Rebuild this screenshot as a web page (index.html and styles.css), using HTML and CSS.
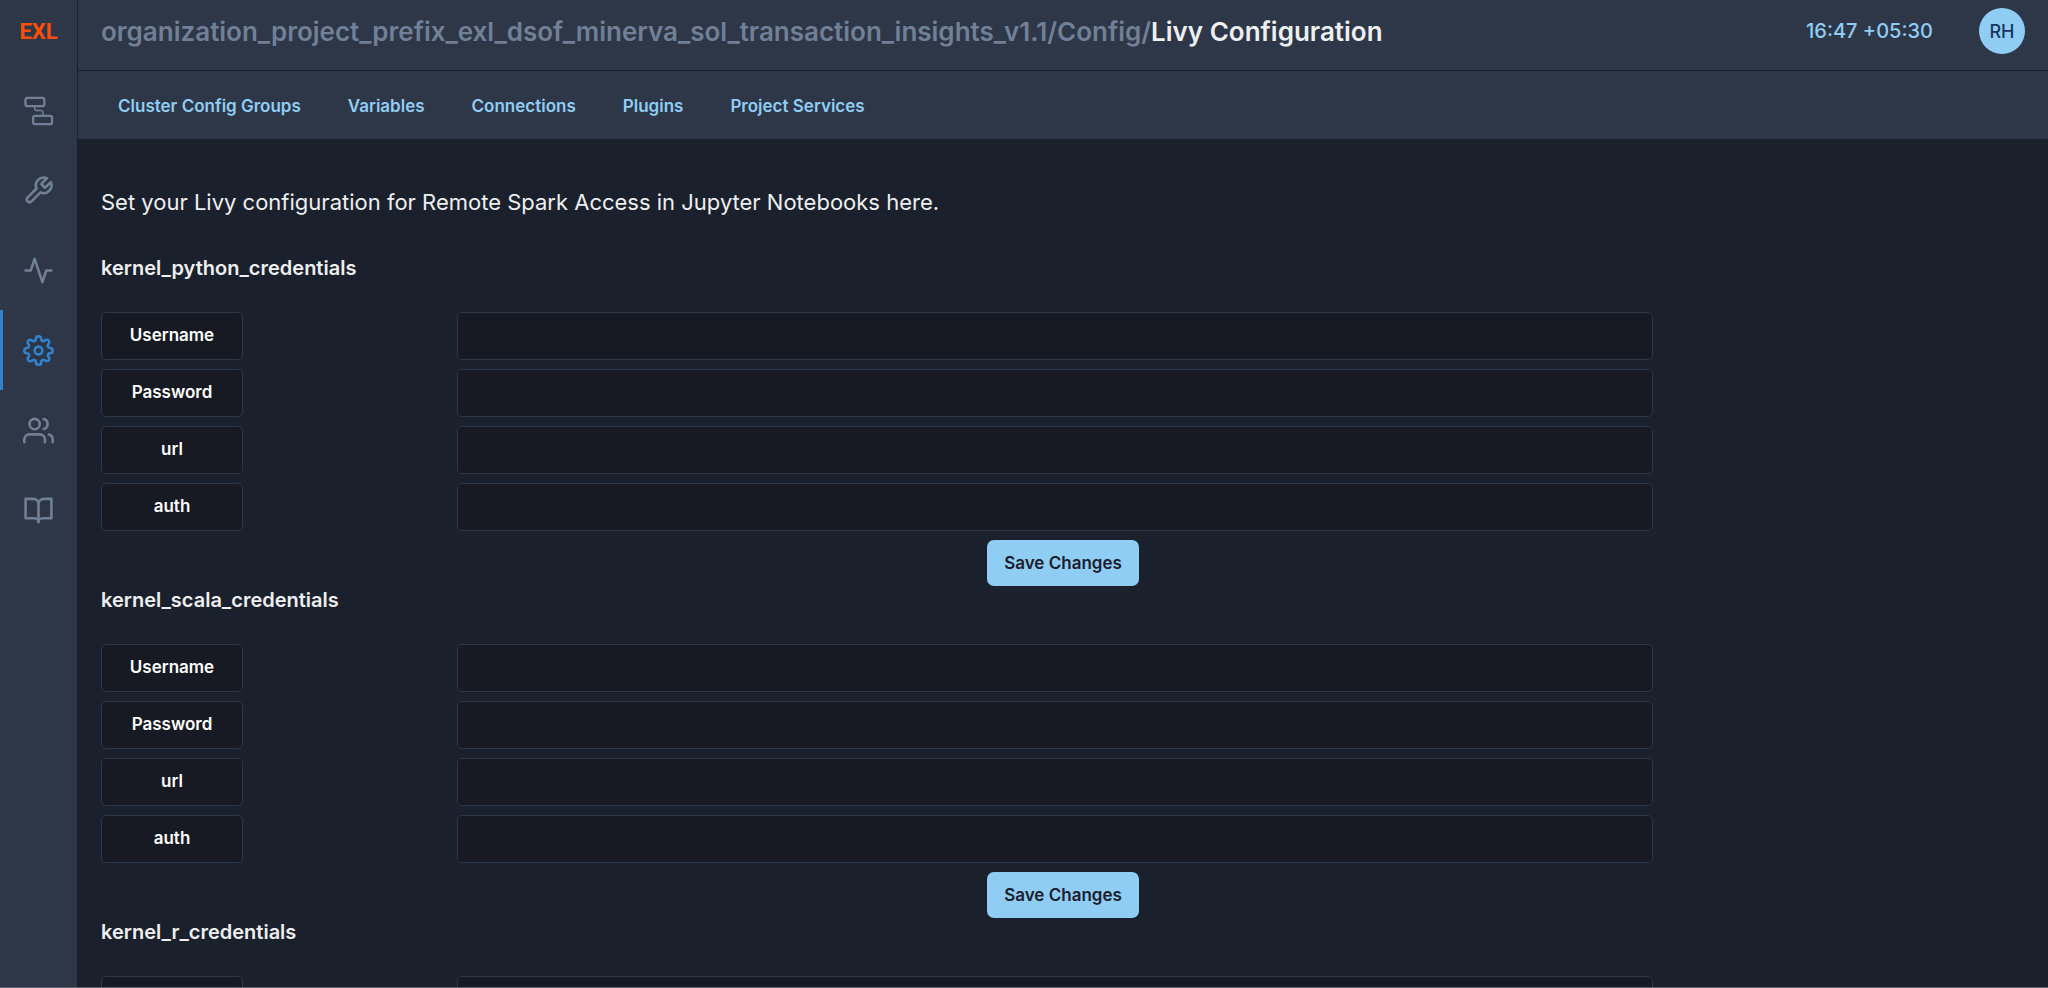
FILE: index.html
```html
<!DOCTYPE html>
<html lang="en">
<head>
<meta charset="utf-8">
<title>Livy Configuration</title>
<link rel="stylesheet" href="styles.css">
</head>
<body>
<div class="app">
  <aside class="sidebar">
    <a class="logo" href="#">EXL</a>
    <nav class="side-nav" aria-label="Main">
      <a class="side-link" href="#" aria-label="Pipelines"><svg class="icon" viewBox="0 0 32 32"><rect x="2.500" y="3" width="19.500" height="8.500" rx="2" stroke-width="2.400"/><rect x="10.500" y="21.500" width="19.500" height="8.500" rx="2" stroke-width="2.400"/><path stroke-width="1.500" d="M12 11.500v2.500a2 2 0 0 0 2 2h4.500a2 2 0 0 1 2 2v3.500"/></svg></a>
      <a class="side-link" href="#" aria-label="Tools"><svg class="icon" viewBox="0 0 24 24"><path d="M14.700 6.300a1 1 0 0 0 0 1.400l1.600 1.600a1 1 0 0 0 1.400 0l3.770-3.770a6 6 0 0 1-7.940 7.940l-6.910 6.910a2.120 2.120 0 0 1-3-3l6.910-6.910a6 6 0 0 1 7.940-7.940l-3.760 3.760z"/></svg></a>
      <a class="side-link" href="#" aria-label="Activity"><svg class="icon" viewBox="0 0 24 24"><path d="M22 12h-4l-3 9L9 3l-3 9H2"/></svg></a>
      <a class="side-link active" href="#" aria-label="Settings"><svg class="icon" viewBox="0 0 24 24"><circle cx="12" cy="12" r="3"/><path d="M19.400 15a1.650 1.650 0 0 0 .33 1.820l.06.06a2 2 0 0 1 0 2.830 2 2 0 0 1-2.830 0l-.06-.06a1.650 1.650 0 0 0-1.820-.33 1.650 1.650 0 0 0-1 1.510V21a2 2 0 0 1-2 2 2 2 0 0 1-2-2v-.09A1.650 1.650 0 0 0 9 19.400a1.650 1.650 0 0 0-1.820.33l-.06.06a2 2 0 0 1-2.830 0 2 2 0 0 1 0-2.830l.06-.06a1.650 1.650 0 0 0 .33-1.820 1.650 1.650 0 0 0-1.510-1H3a2 2 0 0 1-2-2 2 2 0 0 1 2-2h.09A1.650 1.650 0 0 0 4.600 9a1.650 1.650 0 0 0-.33-1.820l-.06-.06a2 2 0 0 1 0-2.830 2 2 0 0 1 2.830 0l.06.06a1.650 1.650 0 0 0 1.820.33H9a1.650 1.650 0 0 0 1-1.510V3a2 2 0 0 1 2-2 2 2 0 0 1 2 2v.09a1.650 1.650 0 0 0 1 1.510 1.650 1.650 0 0 0 1.820-.33l.06-.06a2 2 0 0 1 2.830 0 2 2 0 0 1 0 2.830l-.06.06a1.650 1.650 0 0 0-.33 1.820V9a1.650 1.650 0 0 0 1.510 1H21a2 2 0 0 1 2 2 2 2 0 0 1-2 2h-.09a1.650 1.650 0 0 0-1.510 1z"/></svg></a>
      <a class="side-link" href="#" aria-label="Users"><svg class="icon" viewBox="0 0 24 24"><path d="M17 21v-2a4 4 0 0 0-4-4H5a4 4 0 0 0-4 4v2"/><circle cx="9" cy="7" r="4"/><path d="M23 21v-2a4 4 0 0 0-3-3.870M16 3.130a4 4 0 0 1 0 7.750"/></svg></a>
      <a class="side-link" href="#" aria-label="Documentation"><svg class="icon" viewBox="0 0 24 24"><path d="M2 3h6a4 4 0 0 1 4 4v14a3 3 0 0 0-3-3H2zM22 3h-6a4 4 0 0 0-4 4v14a3 3 0 0 1 3-3h7z"/></svg></a>
    </nav>
  </aside>
  <div class="page">
    <header class="topbar">
      <h1 class="title"><span class="crumb">organization_project_prefix_exl_dsof_minerva_sol_transaction_insights_v1.1/Config/</span>Livy Configuration</h1>
      <time class="clock">16:47 +05:30</time>
      <button class="avatar" type="button">RH</button>
    </header>
    <nav class="tabs" aria-label="Configuration">
      <a class="tab" href="#">Cluster Config Groups</a>
      <a class="tab" href="#">Variables</a>
      <a class="tab" href="#">Connections</a>
      <a class="tab" href="#">Plugins</a>
      <a class="tab" href="#">Project Services</a>
    </nav>
    <main class="content">
      <p class="intro">Set your Livy configuration for Remote Spark Access in Jupyter Notebooks here.</p>
      <form class="group">
        <h2 class="group-title">kernel_python_credentials</h2>
        <div class="row"><label class="name" for="py-user">Username</label><input class="value" id="py-user" type="text"></div>
        <div class="row"><label class="name" for="py-pass">Password</label><input class="value" id="py-pass" type="password"></div>
        <div class="row"><label class="name" for="py-url">url</label><input class="value" id="py-url" type="text"></div>
        <div class="row"><label class="name" for="py-auth">auth</label><input class="value" id="py-auth" type="text"></div>
        <button class="save" type="button">Save Changes</button>
      </form>
      <form class="group">
        <h2 class="group-title">kernel_scala_credentials</h2>
        <div class="row"><label class="name" for="sc-user">Username</label><input class="value" id="sc-user" type="text"></div>
        <div class="row"><label class="name" for="sc-pass">Password</label><input class="value" id="sc-pass" type="password"></div>
        <div class="row"><label class="name" for="sc-url">url</label><input class="value" id="sc-url" type="text"></div>
        <div class="row"><label class="name" for="sc-auth">auth</label><input class="value" id="sc-auth" type="text"></div>
        <button class="save" type="button">Save Changes</button>
      </form>
      <form class="group">
        <h2 class="group-title">kernel_r_credentials</h2>
        <div class="row"><label class="name" for="r-user">Username</label><input class="value" id="r-user" type="text"></div>
      </form>
    </main>
  </div>
</div>
</body>
</html>
```
FILE: styles.css
```css
* { box-sizing: border-box; }

body {
  margin: 0;
  background: #1a202c;
  color: #eeeff0;
  font-family: Inter, "Liberation Sans", sans-serif;
}

a { text-decoration: none; }

.app {
  display: flex;
  height: 100vh;
  overflow: hidden;
  border-bottom: 1px solid #606672;
}

.sidebar {
  flex: none;
  width: 78px;
  background: #2d3748;
  border-right: 1px solid #1a202c;
}

.logo {
  display: flex;
  align-items: center;
  justify-content: center;
  height: 62px;
  margin-bottom: 8px;
  color: #fb4e0b;
  font: bold 22px Roboto, sans-serif;
}

.side-nav {
  display: flex;
  flex-direction: column;
}

.side-link {
  display: flex;
  align-items: center;
  justify-content: center;
  height: 80px;
  border-left: 3px solid transparent;
  padding-right: 4px;
  color: #718096;
}

.side-link.active {
  border-left-color: #3182ce;
  color: #3182ce;
}

.icon {
  width: 31px;
  height: 31px;
  fill: none;
  stroke: currentColor;
  stroke-width: 2;
  stroke-linecap: round;
  stroke-linejoin: round;
}

.page {
  flex: 1;
  min-width: 0;
}

.topbar {
  display: flex;
  align-items: center;
  gap: 46px;
  height: 71px;
  padding: 0 23px 8px;
  background: #2d3748;
  border-bottom: 1px solid #1a202c;
}

.title {
  flex: 1;
  margin: 0;
  font-size: 26px;
  font-weight: 600;
  white-space: nowrap;
}

.crumb { color: #718096; }

.clock {
  color: #90cdf4;
  font-size: 20px;
  font-weight: 500;
}

.avatar {
  width: 46px;
  height: 46px;
  padding: 0;
  border: 0;
  border-radius: 50%;
  background: #90cdf4;
  color: #1a365d;
  font: 500 18px Inter, sans-serif;
}

.tabs {
  display: flex;
  align-items: center;
  gap: 47px;
  height: 68px;
  padding: 2px 40px 0;
  background: #2d3748;
}

.tab {
  color: #90cdf4;
  font-size: 17px;
  font-weight: 600;
}

.content { padding: 47px 23px 0; }

.intro {
  margin: 0 0 36px;
  font-size: 22px;
  line-height: 32px;
}

.group-title {
  margin: 0;
  padding-bottom: 30px;
  font-size: 20px;
  font-weight: 600;
  line-height: 28px;
}

.row {
  display: grid;
  grid-template-columns: 356fr 1195fr 372fr;
  margin-bottom: 9px;
}

.name,
.value {
  height: 48px;
  border: 1px solid #2d3748;
  border-radius: 5px;
  background: #171923;
}

.name {
  display: flex;
  align-items: center;
  justify-content: center;
  width: 142px;
  padding-bottom: 2px;
  color: #fff;
  font-size: 17px;
  font-weight: 600;
}

.value {
  width: 100%;
  padding: 0 16px;
  color: #fff;
  font: 16px Inter, sans-serif;
}

.save {
  display: block;
  height: 46px;
  margin: 0 auto;
  padding: 0 17px;
  border: 0;
  border-radius: 7px;
  background: #90cdf4;
  color: #1a202c;
  font: 600 17px Inter, sans-serif;
}
```
